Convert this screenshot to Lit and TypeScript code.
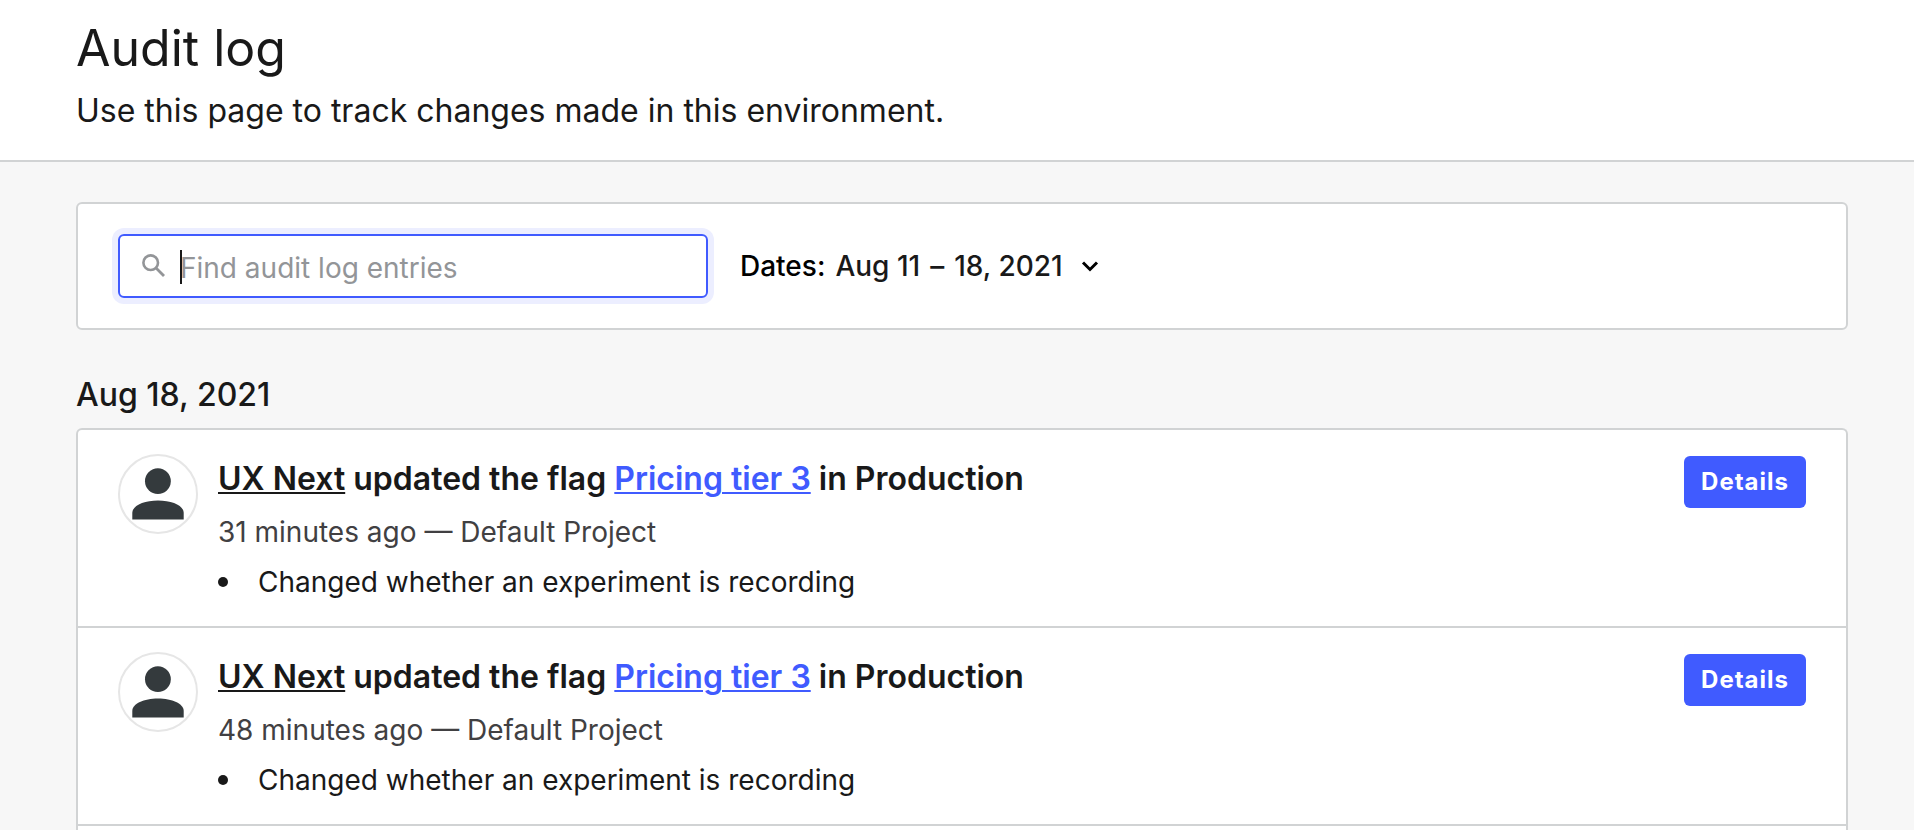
import { LitElement, html, css } from "lit";
import { customElement, property, state } from "lit/decorators.js";

interface Entry {
  member: string;
  flag: string;
  environment: string;
  time: string;
  project: string;
  changes: string[];
}

const entries: Entry[] = [
  {
    member: "UX Next",
    flag: "Pricing tier 3",
    environment: "Production",
    time: "31 minutes ago",
    project: "Default Project",
    changes: ["Changed whether an experiment is recording"],
  },
  {
    member: "UX Next",
    flag: "Pricing tier 3",
    environment: "Production",
    time: "48 minutes ago",
    project: "Default Project",
    changes: ["Changed whether an experiment is recording"],
  },
];

@customElement("audit-entry")
export class AuditEntry extends LitElement {
  @property({ attribute: false }) entry!: Entry;

  static styles = css`
    :host {
      display: flex;
      align-items: flex-start;
      gap: 20px;
      padding: 24px 40px 22px;
      border-bottom: 2px solid #d1d3d4;
    }
    .avatar {
      flex: none;
      box-sizing: border-box;
      width: 80px;
      height: 80px;
      border: 2px solid #e6e6e6;
      border-radius: 50%;
      overflow: hidden;
    }
    .avatar svg {
      display: block;
    }
    .body {
      flex: 1;
      min-width: 0;
    }
    .title {
      margin: 0;
      font-size: 32px;
      line-height: 50px;
      font-weight: 600;
    }
    .title a {
      color: inherit;
      text-decoration: underline;
      text-decoration-thickness: 2px;
      text-underline-offset: 2px;
    }
    .title .flag {
      color: #405bff;
    }
    .meta {
      margin: 6px 0 0;
      font-size: 28px;
      line-height: 44px;
      color: #414042;
    }
    .changes {
      margin: 6px 0 0;
      padding: 0;
      list-style: none;
      font-size: 28px;
      line-height: 44px;
    }
    .changes li {
      display: flex;
      align-items: center;
      gap: 30px;
    }
    .changes li::before {
      content: "";
      flex: none;
      width: 10px;
      height: 10px;
      border-radius: 50%;
      background: #191919;
    }
    .details {
      flex: none;
      margin: 2px 0 0;
      padding: 0 17px;
      border: 0;
      border-radius: 6px;
      background: #405bff;
      color: #fff;
      font-family: inherit;
      font-optical-sizing: none;
      font-size: 24px;
      line-height: 52px;
      font-weight: 700;
      letter-spacing: 1px;
      cursor: pointer;
    }
  `;

  render() {
    const e = this.entry;
    return html`
      <div class="avatar">
        <svg width="76" height="76" viewBox="0 0 76 76" fill="#343a3d" aria-hidden="true">
          <circle cx="37.9" cy="25.2" r="12.9" />
          <path d="M12.300 63.400V57C12.300 49.500 24 44.500 38 44.500S63.700 49.500 63.700 57V63.400Z" />
        </svg>
      </div>
      <div class="body">
        <h3 class="title"><a href="#member">${e.member}</a> updated the flag <a class="flag" href="#flag">${e.flag}</a> in ${e.environment}</h3>
        <p class="meta">${e.time} — ${e.project}</p>
        <ul class="changes">
          ${e.changes.map((c) => html`<li>${c}</li>`)}
        </ul>
      </div>
      <button class="details" type="button">Details</button>
    `;
  }
}

@customElement("app-root")
export class AppRoot extends LitElement {
  @state() private query = "";

  static styles = css`
    :host {
      display: flex;
      flex-direction: column;
      min-height: 100vh;
      background: #f7f7f7;
      color: #191919;
      font-family: Inter, "Liberation Sans", sans-serif;
      font-optical-sizing: none;
    }
    .header {
      padding: 16px 76px 26px;
      background: #fff;
      border-bottom: 2px solid #d1d3d4;
    }
    h1 {
      margin: 0;
      font-size: 50px;
      line-height: 64px;
      font-weight: 400;
    }
    .lead {
      margin: 8px 0 0;
      font-size: 32px;
      line-height: 46px;
    }
    main {
      flex: 1;
      display: flex;
      flex-direction: column;
      padding: 40px 66px 0 76px;
    }
    .filters {
      display: flex;
      align-items: center;
      gap: 32px;
      padding: 30px 40px;
      background: #fff;
      border: 2px solid #d1d3d4;
      border-radius: 6px;
    }
    .search {
      box-sizing: border-box;
      flex: 0 1 590px;
      display: flex;
      align-items: center;
      gap: 14px;
      height: 64px;
      padding: 0 20px;
      border: 2px solid #405bff;
      border-radius: 6px;
      box-shadow: 0 0 0 6px #eceeff;
    }
    .search svg {
      flex: none;
    }
    .field {
      position: relative;
      flex: 1;
      min-width: 0;
      display: flex;
    }
    .field input {
      flex: 1;
      min-width: 0;
      padding: 4px 0 0;
      border: 0;
      outline: 0;
      background: none;
      color: inherit;
      font: inherit;
      font-optical-sizing: none;
      font-size: 28px;
      line-height: 36px;
      caret-color: #191919;
    }
    .field input::placeholder {
      color: #939598;
      opacity: 1;
    }
    .field input:placeholder-shown {
      caret-color: transparent;
    }
    .caret {
      position: absolute;
      top: 4px;
      bottom: 2px;
      left: 0;
      width: 2px;
      background: #191919;
      pointer-events: none;
    }
    .dates {
      display: flex;
      align-items: center;
      gap: 10px;
      padding: 0;
      border: 0;
      background: none;
      color: #000;
      font-family: inherit;
      font-optical-sizing: none;
      font-size: 28px;
      line-height: 36px;
      font-weight: 500;
      cursor: pointer;
    }
    .range {
      display: flex;
      gap: 10px;
      margin-right: 8px;
      color: #191919;
    }
    h2 {
      margin: 40px 0 8px;
      font-size: 32px;
      line-height: 50px;
      font-weight: 500;
    }
    .list {
      flex: 1;
      background: #fff;
      border: 2px solid #d1d3d4;
      border-bottom: 0;
      border-radius: 6px 6px 0 0;
    }
  `;

  firstUpdated() {
    this.renderRoot.querySelector<HTMLInputElement>("input")?.focus();
  }

  private onInput(e: Event) {
    this.query = (e.target as HTMLInputElement).value;
  }

  render() {
    return html`
      <header class="header">
        <h1>Audit log</h1>
        <p class="lead">Use this page to track changes made in this environment.</p>
      </header>
      <main>
        <div class="filters">
          <label class="search">
            <svg width="26" height="26" viewBox="0 0 26 26" fill="none" stroke="#939598" stroke-width="2.600" aria-hidden="true">
              <circle cx="10.700" cy="9.700" r="7.300" />
              <path d="M15.800 14.800L24 23" stroke-width="2.800" />
            </svg>
            <span class="field">
              <input type="text" placeholder="Find audit log entries" aria-label="Find audit log entries" @input=${this.onInput} />
              ${this.query ? "" : html`<span class="caret"></span>`}
            </span>
          </label>
          <button class="dates" type="button">
            <span>Dates:</span>
            <span class="range"><span>Aug 11</span><span>–</span><span>18, 2021</span></span>
            <svg width="18" height="12" viewBox="0 0 18 12" fill="none" stroke="#000" stroke-width="3" aria-hidden="true">
              <path d="M2 2.500L9 9.500L16 2.500" />
            </svg>
          </button>
        </div>
        <h2>Aug 18, 2021</h2>
        <section class="list">
          ${entries.map((e) => html`<audit-entry .entry=${e}></audit-entry>`)}
        </section>
      </main>
    `;
  }
}
